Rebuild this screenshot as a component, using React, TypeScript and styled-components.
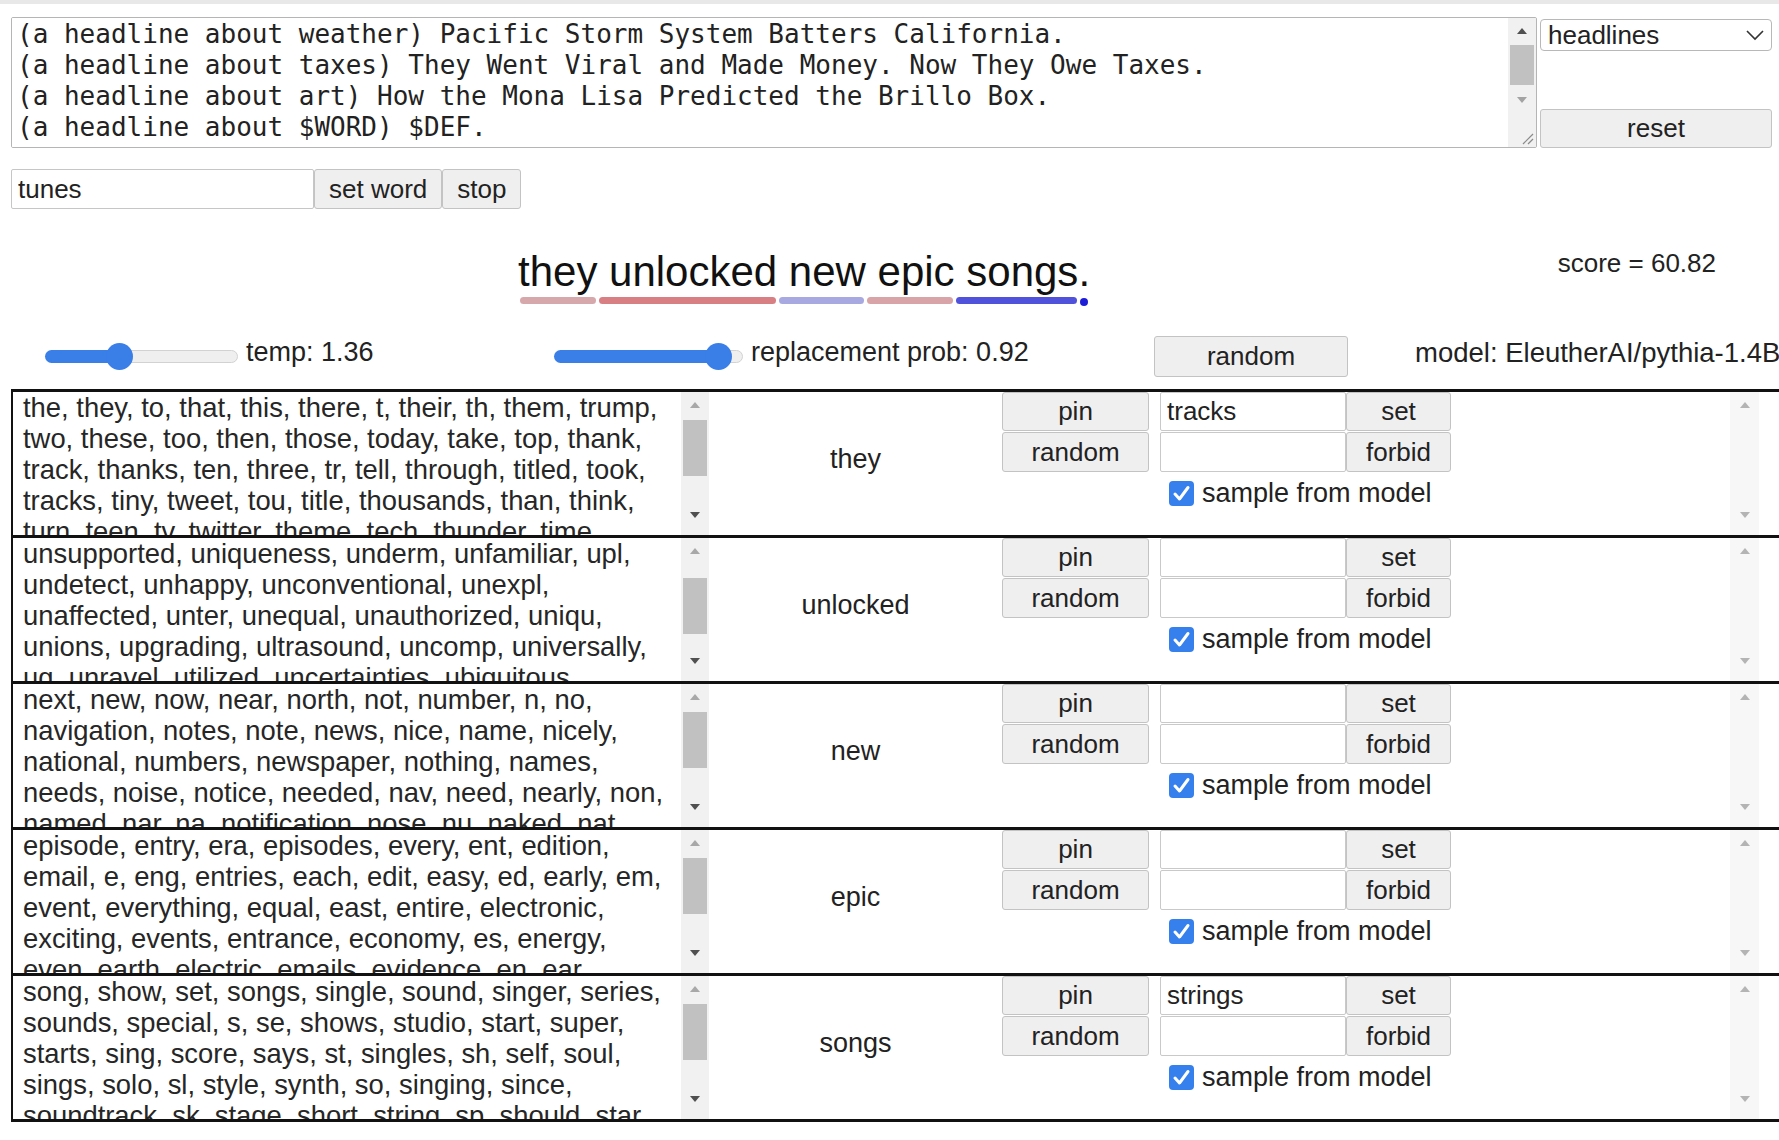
import styled, { createGlobalStyle } from 'styled-components';

const prompt = [
  '(a headline about weather) Pacific Storm System Batters California.',
  '(a headline about taxes) They Went Viral and Made Money. Now They Owe Taxes.',
  '(a headline about art) How the Mona Lisa Predicted the Brillo Box.',
  '(a headline about $WORD) $DEF.',
].join('\n');

const tokens = [
  { text: 'they', color: '#d6a8ab' },
  { text: ' unlocked', color: '#d87f84' },
  { text: ' new', color: '#a7a9e0' },
  { text: ' epic', color: '#d8a4a7' },
  { text: ' songs', color: '#5052dc' },
  { text: '.', color: '#1d1dd8' },
];

const rows = [
  {
    word: 'they',
    pinned: 'tracks',
    thumbTop: 2,
    list: 'the, they, to, that, this, there, t, their, th, them, trump, two, these, too, then, those, today, take, top, thank, track, thanks, ten, three, tr, tell, through, titled, took, tracks, tiny, tweet, tou, title, thousands, than, think, turn, teen, tv, twitter, theme, tech, thunder, time, television, tour, trip',
  },
  {
    word: 'unlocked',
    pinned: '',
    thumbTop: 14,
    list: 'unsupported, uniqueness, underm, unfamiliar, upl, undetect, unhappy, unconventional, unexpl, unaffected, unter, unequal, unauthorized, uniqu, unions, upgrading, ultrasound, uncomp, universally, ug, unravel, utilized, uncertainties, ubiquitous, unveiled, unique',
  },
  {
    word: 'new',
    pinned: '',
    thumbTop: 2,
    list: 'next, new, now, near, north, not, number, n, no, navigation, notes, note, news, nice, name, nicely, national, numbers, newspaper, nothing, names, needs, noise, notice, needed, nav, need, nearly, non, named, nar, na, notification, nose, nu, naked, nat, night',
  },
  {
    word: 'epic',
    pinned: '',
    thumbTop: 2,
    list: 'episode, entry, era, episodes, every, ent, edition, email, e, eng, entries, each, edit, easy, ed, early, em, event, everything, equal, east, entire, electronic, exciting, events, entrance, economy, es, energy, even, earth, electric, emails, evidence, en, ear, everywhere, end',
  },
  {
    word: 'songs',
    pinned: 'strings',
    thumbTop: 2,
    list: 'song, show, set, songs, single, sound, singer, series, sounds, special, s, se, shows, studio, start, super, starts, sing, score, says, st, singles, sh, self, soul, sings, solo, sl, style, synth, so, singing, since, soundtrack, sk, stage, short, string, sp, should, star, stuff',
  },
];

function ScrollBar({
  width,
  track,
  thumbTop,
  thumbHeight,
  upTone,
  downTone,
  padBottom = 0,
  grip = false,
}: {
  width: number;
  track: string;
  thumbTop?: number;
  thumbHeight?: number;
  upTone: string;
  downTone: string;
  padBottom?: number;
  grip?: boolean;
}) {
  return (
    <Track $w={width} $bg={track} $padBottom={padBottom}>
      <ArrowCell>
        <Arrow $dir="up" $tone={upTone} />
      </ArrowCell>
      <ThumbLane>{thumbHeight ? <Thumb $top={thumbTop ?? 0} $h={thumbHeight} /> : null}</ThumbLane>
      <ArrowCell>
        <Arrow $dir="down" $tone={downTone} />
      </ArrowCell>
      {grip && (
        <Grip>
          <svg width="14" height="14" viewBox="0 0 14 14">
            <line x1="3" y1="13" x2="13" y2="3" stroke="#8a8a8a" strokeWidth="1.2" />
            <line x1="8" y1="13" x2="13" y2="8" stroke="#8a8a8a" strokeWidth="1.2" />
          </svg>
        </Grip>
      )}
    </Track>
  );
}

function Slider({ width, fill }: { width: number; fill: number }) {
  return (
    <SliderTrack $w={width}>
      <SliderFill $w={fill} />
      <SliderThumb />
      <SliderRest />
    </SliderTrack>
  );
}

function CheckBox() {
  return (
    <CheckMark>
      <svg width="25" height="25" viewBox="0 0 25 25">
        <polyline points="6,13 10.5,18 19,6.5" fill="none" stroke="#fff" strokeWidth="3" strokeLinecap="round" strokeLinejoin="round" />
      </svg>
    </CheckMark>
  );
}

export default function App() {
  return (
    <>
      <GlobalStyle />
      <TopBand />
      <Main>
        <Header>
          <PromptBox>
            <PromptText defaultValue={prompt} spellCheck={false} />
            <ScrollBar width={28} track="#f1f1f1" thumbTop={1} thumbHeight={40} upTone="#505050" downTone="#a3a3a3" grip />
          </PromptBox>
          <Side>
            <SelectBox>
              <span>headlines</span>
              <svg width="20" height="12" viewBox="0 0 20 12">
                <polyline points="2,2 10,10 18,2" fill="none" stroke="#333" strokeWidth="1.6" />
              </svg>
            </SelectBox>
            <ResetButton>reset</ResetButton>
          </Side>
        </Header>

        <WordRow>
          <WordInput defaultValue="tunes" />
          <Button>set word</Button>
          <Button>stop</Button>
        </WordRow>

        <SentenceRow>
          <Sentence>
            {tokens.map((t, i) => (
              <Token key={i}>
                <span>{t.text}</span>
                <TokenBar $color={t.color} $dot={t.text === '.'} />
              </Token>
            ))}
          </Sentence>
          <Score>score = 60.82</Score>
        </SentenceRow>

        <SliderRow>
          <SliderGroup $w={509}>
            <Slider width={193} fill={74} />
            <SliderLabel>temp: 1.36</SliderLabel>
          </SliderGroup>
          <SliderGroup $w={600}>
            <Slider width={189} fill={164} />
            <SliderLabel>replacement prob: 0.92</SliderLabel>
          </SliderGroup>
          <RandomButton>random</RandomButton>
          <ModelLabel>model: EleutherAI/pythia-1.4B</ModelLabel>
        </SliderRow>

        <RowList>
          {rows.map((row) => (
            <Row key={row.word}>
              <ListPane>
                <ListText>{row.list}</ListText>
                <ScrollBar width={28} track="#f1f1f1" thumbTop={row.thumbTop} thumbHeight={56} upTone="#a8a8a8" downTone="#505050" padBottom={7} />
              </ListPane>
              <WordCell>{row.word}</WordCell>
              <Controls>
                <Button>pin</Button>
                <FieldInput defaultValue={row.pinned} />
                <Button>set</Button>
                <Button>random</Button>
                <FieldInput defaultValue="" />
                <Button>forbid</Button>
                <CheckLine>
                  <CheckBox />
                  <span>sample from model</span>
                </CheckLine>
              </Controls>
              <Spacer />
              <ScrollBar width={29} track="#f7f7f7" upTone="#b4b4b4" downTone="#b4b4b4" padBottom={7} />
            </Row>
          ))}
        </RowList>
      </Main>
    </>
  );
}

const GlobalStyle = createGlobalStyle`
  html, body {
    margin: 0;
    padding: 0;
    background: #fff;
  }
  body {
    font-family: 'Liberation Sans', Arial, sans-serif;
    color: #222;
    overflow: hidden;
    width: 1779px;
    height: 1140px;
  }
  * { box-sizing: border-box; }
`;

const TopBand = styled.div`
  height: 4px;
  background: #e8e8e8;
`;

const Main = styled.div`
  padding: 13px 0 0 11px;
`;

const Header = styled.div`
  display: flex;
  gap: 3px;
  height: 131px;
`;

const PromptBox = styled.div`
  width: 1526px;
  display: flex;
  border: 1px solid #b5b5b5;
  border-radius: 2px;
  overflow: hidden;
`;

const PromptText = styled.textarea`
  flex: 1;
  margin: 0;
  border: none;
  outline: none;
  resize: none;
  overflow: hidden;
  white-space: pre;
  padding: 1px 5px;
  font: 26px/31px 'DejaVu Sans Mono', 'Liberation Mono', monospace;
  color: #222;
`;

const Track = styled.div<{ $w: number; $bg: string; $padBottom: number }>`
  width: ${(p) => p.$w}px;
  flex: none;
  display: flex;
  flex-direction: column;
  background: ${(p) => p.$bg};
  padding-bottom: ${(p) => p.$padBottom}px;
`;

const ArrowCell = styled.div`
  height: 26px;
  flex: none;
  display: flex;
  align-items: center;
  justify-content: center;
`;

const Arrow = styled.span<{ $dir: 'up' | 'down'; $tone: string }>`
  width: 0;
  height: 0;
  border-left: 5px solid transparent;
  border-right: 5px solid transparent;
  ${(p) =>
    p.$dir === 'up'
      ? `border-bottom: 6px solid ${p.$tone};`
      : `border-top: 6px solid ${p.$tone};`}
`;

const ThumbLane = styled.div`
  flex: 1;
  display: flex;
  flex-direction: column;
  padding: 0 2px;
`;

const Thumb = styled.div<{ $top: number; $h: number }>`
  margin-top: ${(p) => p.$top}px;
  height: ${(p) => p.$h}px;
  background: #c1c1c1;
`;

const Grip = styled.div`
  height: 34px;
  display: flex;
  align-items: flex-end;
  justify-content: flex-end;
  padding: 0 2px 2px 0;
`;

const Side = styled.div`
  width: 232px;
  display: flex;
  flex-direction: column;
  justify-content: space-between;
  padding-top: 2px;
`;

const SelectBox = styled.div`
  height: 32px;
  display: flex;
  align-items: center;
  justify-content: space-between;
  padding: 0 6px 0 7px;
  border: 1px solid #b8b8b8;
  border-radius: 4px;
  font-size: 26px;
  color: #222;
`;

const Button = styled.button`
  height: 40px;
  margin: 0;
  padding: 0 14px;
  font-family: 'Liberation Sans', Arial, sans-serif;
  font-size: 26px;
  color: #222;
  background: #efefef;
  border: 1px solid #c3c3c3;
  border-radius: 3px;
`;

const ResetButton = styled(Button)`
  height: 39px;
  width: 232px;
`;

const WordRow = styled.div`
  display: flex;
  margin-top: 21px;
  height: 40px;
`;

const WordInput = styled.input`
  width: 303px;
  height: 40px;
  margin: 0;
  padding: 0 6px;
  border: 1px solid #c6c6c6;
  border-radius: 2px;
  font-family: 'Liberation Sans', Arial, sans-serif;
  font-size: 26px;
  color: #222;
`;

const SentenceRow = styled.div`
  display: flex;
  align-items: flex-start;
  height: 121px;
`;

const Sentence = styled.div`
  margin-left: 507px;
  padding-top: 39px;
  display: flex;
  font-size: 42px;
  line-height: 48px;
  color: #111;
`;

const Token = styled.div`
  display: flex;
  flex-direction: column;
  white-space: pre;
`;

const TokenBar = styled.div<{ $color: string; $dot: boolean }>`
  height: 7px;
  margin: 1px 1.5px 0;
  border-radius: 4px;
  background: ${(p) => p.$color};
  ${(p) => (p.$dot ? 'width: 8px; height: 8px; margin-top: 2px;' : '')}
`;

const Score = styled.div`
  margin-left: auto;
  margin-right: 63px;
  padding-top: 39px;
  font-size: 26px;
  line-height: 30px;
`;

const SliderRow = styled.div`
  display: flex;
  align-items: center;
  height: 52px;
  margin-bottom: 7px;
  padding-left: 34px;
  white-space: nowrap;
`;

const SliderGroup = styled.div<{ $w: number }>`
  width: ${(p) => p.$w}px;
  flex: none;
  display: flex;
  align-items: center;
  gap: 8px;
`;

const SliderTrack = styled.div<{ $w: number }>`
  width: ${(p) => p.$w}px;
  height: 28px;
  display: flex;
  align-items: center;
`;

const SliderFill = styled.div<{ $w: number }>`
  width: ${(p) => p.$w}px;
  height: 13px;
  background: #3a7ee8;
  border-radius: 7px 0 0 7px;
`;

const SliderThumb = styled.div`
  position: relative;
  z-index: 1;
  width: 27px;
  height: 27px;
  margin: 0 -13.5px;
  border-radius: 50%;
  background: #3a7ee8;
`;

const SliderRest = styled.div`
  flex: 1;
  height: 13px;
  background: #efefef;
  border: 1px solid #d2d2d2;
  border-radius: 0 7px 7px 0;
`;

const SliderLabel = styled.span`
  font-size: 27px;
  margin-bottom: 7px;
`;

const RandomButton = styled(Button)`
  width: 194px;
  height: 41px;
  flex: none;
`;

const ModelLabel = styled.span`
  margin-left: 67px;
  margin-bottom: 7px;
  font-size: 27.5px;
`;

const RowList = styled.div`
  border-bottom: 3px solid #111;
`;

const Row = styled.div`
  display: flex;
  height: 146px;
  border-top: 3px solid #111;
  border-left: 2px solid #111;
  padding-right: 20px;
`;

const ListPane = styled.div`
  width: 696px;
  flex: none;
  display: flex;
`;

const ListText = styled.div`
  flex: 1;
  padding: 0 8px 0 10px;
  font-size: 27.4px;
  line-height: 31px;
  overflow: hidden;
  color: #262626;
`;

const WordCell = styled.div`
  width: 293px;
  flex: none;
  display: flex;
  align-items: center;
  justify-content: center;
  padding-bottom: 9px;
  font-size: 27px;
`;

const Controls = styled.div`
  flex: none;
  display: grid;
  grid-template-columns: 147px 197px 105px;
  grid-template-rows: 39px 40px 40px;
  row-gap: 1px;
  align-content: start;

  & > button {
    height: 100%;
    padding: 0;
  }
`;

const FieldInput = styled.input`
  margin: 0 0 0 11px;
  width: 186px;
  height: 100%;
  padding: 0 6px;
  border: 1px solid #c9c9c9;
  border-radius: 2px;
  font-family: 'Liberation Sans', Arial, sans-serif;
  font-size: 26px;
  color: #222;
`;

const CheckLine = styled.label`
  grid-column: 2 / 4;
  display: flex;
  align-items: center;
  gap: 8px;
  padding-left: 20px;
  font-size: 27px;
  white-space: nowrap;
`;

const CheckMark = styled.span`
  width: 25px;
  height: 25px;
  flex: none;
  display: flex;
  border-radius: 4px;
  background: #3580ec;
`;

const Spacer = styled.div`
  flex: 1;
`;
